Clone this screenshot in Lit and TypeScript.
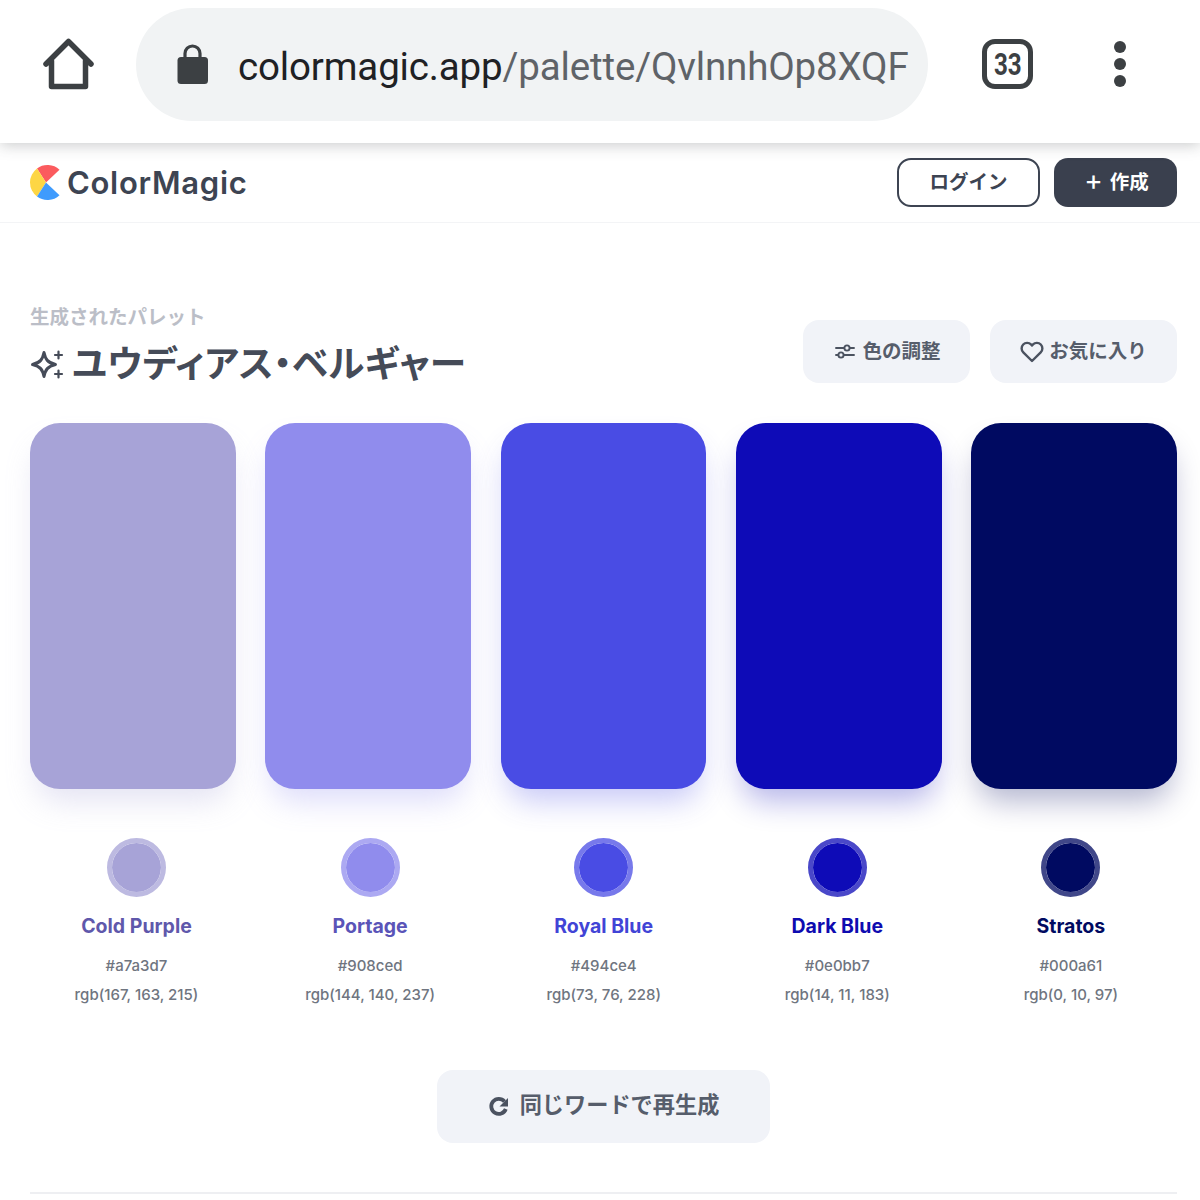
import { LitElement, html, css, svg } from 'lit';
import { customElement } from 'lit/decorators.js';

type Swatch = { name: string; hex: string; rgb: string; ink: string };

const SWATCHES: Swatch[] = [
  { name: 'Cold Purple', hex: '#a7a3d7', rgb: 'rgb(167, 163, 215)', ink: '#5f58ab' },
  { name: 'Portage', hex: '#908ced', rgb: 'rgb(144, 140, 237)', ink: '#5a54b8' },
  { name: 'Royal Blue', hex: '#494ce4', rgb: 'rgb(73, 76, 228)', ink: '#4144d6' },
  { name: 'Dark Blue', hex: '#0e0bb7', rgb: 'rgb(14, 11, 183)', ink: '#0e0bb0' },
  { name: 'Stratos', hex: '#000a61', rgb: 'rgb(0, 10, 97)', ink: '#000a61' },
];

const homeIcon = svg`<path d="M3 26 L25.5 3.5 L48 26 M8.5 23 V48.5 H42.5 V23" fill="none" stroke="#3c4043" stroke-width="5.5" stroke-linecap="round" stroke-linejoin="round"/>`;
const lockIcon = svg`<path d="M8 14 V9.5 a7.5 7.5 0 0 1 15 0 V14" fill="none" stroke="#3c4043" stroke-width="3.2"/><rect x="0.5" y="13" width="30.5" height="27" rx="3.5" fill="#3c4043"/>`;
const logoIcon = svg`
  <path d="M16 17.5 L29.5 4.8 A17.5 17.5 0 0 0 7 3.5 Z" fill="#fb5b5e"/>
  <path d="M16 17.5 L7 3.5 A17.5 17.5 0 0 0 7 31.5 Z" fill="#fdd645"/>
  <path d="M16 17.5 L7 31.5 A17.5 17.5 0 0 0 29.5 30.2 Z" fill="#3f9bfd"/>`;
const sparkleIcon = svg`
  <path d="M14 4.5 C15.5 11.5 17.500 14.500 25.500 16.500 C17.500 18.500 15.500 21.500 14 28.500 C12.500 21.500 10.500 18.500 2.500 16.500 C10.500 14.500 12.500 11.500 14 4.500 Z" fill="none" stroke="#454b58" stroke-width="3" stroke-linejoin="round"/>
  <path d="M28.500 3.500 V10.500 M25 7 H32 M28.500 22.500 V29.500 M25 26 H32" stroke="#454b58" stroke-width="2.200" stroke-linecap="round"/>`;
const slidersIcon = svg`
  <path d="M1 6 H9 M15 6 H19 M1 13 H3 M9 13 H19" stroke="#4b5260" stroke-width="1.900" stroke-linecap="round"/>
  <circle cx="12" cy="6" r="2.600" fill="none" stroke="#4b5260" stroke-width="1.900"/>
  <circle cx="6" cy="13" r="2.600" fill="none" stroke="#4b5260" stroke-width="1.900"/>`;
const heartIcon = svg`<path d="M12 21 L3.300 12.300 A5.500 5.500 0 0 1 11 4.400 L12 5.600 L13 4.400 A5.500 5.500 0 0 1 20.700 12.300 Z" fill="none" stroke="#4b5260" stroke-width="2.400" stroke-linejoin="round"/>`;
const refreshIcon = svg`
  <path d="M16.500 5.500 A7.500 7.500 0 1 0 17.800 13" fill="none" stroke="#4b5260" stroke-width="3.800"/>
  <path d="M20 2 V10.500 H11.500 Z" fill="#4b5260"/>`;

@customElement('app-root')
export class AppRoot extends LitElement {
  static styles = css`
    :host {
      display: block;
      width: 1200px;
      height: 1200px;
      overflow: hidden;
      background: #fff;
      font-family: Inter, 'Noto Sans CJK JP', sans-serif;
      color: #454b58;
    }
    .toolbar {
      position: relative;
      z-index: 1;
      height: 143px;
      box-sizing: border-box;
      display: flex;
      align-items: flex-start;
      background: #fff;
      box-shadow: 0 2px 14px rgba(60, 64, 67, 0.28);
    }
    .home {
      margin: 38px 0 0 43px;
      flex: none;
    }
    .url {
      margin: 8px 0 0 42px;
      width: 792px;
      height: 113px;
      box-sizing: border-box;
      padding-left: 41px;
      border-radius: 57px;
      background: #f1f3f4;
      display: flex;
      align-items: center;
      gap: 30px;
      flex: none;
      font-family: Roboto, sans-serif;
      font-size: 38.5px;
      color: #5f6368;
      letter-spacing: -0.15px;
    }
    .url svg {
      flex: none;
      margin-top: -1px;
    }
    .url span {
      padding-top: 4px;
    }
    .url b {
      font-weight: 400;
      color: #202124;
    }
    .tabs {
      margin: 39px 0 0 54px;
      width: 51px;
      height: 50px;
      box-sizing: border-box;
      border: 5px solid #3c4043;
      border-radius: 13px;
      flex: none;
      display: flex;
      align-items: center;
      justify-content: center;
      font-family: Roboto, sans-serif;
      font-weight: 700;
      font-size: 31px;
      color: #3c4043;
    }
    .tabs span {
      transform: scaleX(0.78);
    }
    .menu {
      margin: 41px 0 0 81px;
      display: flex;
      flex-direction: column;
      gap: 5px;
    }
    .menu i {
      width: 12px;
      height: 12px;
      border-radius: 50%;
      background: #3c4043;
    }
    .site-head {
      height: 80px;
      box-sizing: border-box;
      padding: 15px 23px 0 30px;
      display: flex;
      justify-content: space-between;
      align-items: flex-start;
      border-bottom: 1.5px solid #f3f4f6;
    }
    .brand {
      display: flex;
      align-items: center;
      gap: 7px;
      margin-top: 7px;
      font-family: Inter, sans-serif;
      font-weight: 600;
      font-size: 31px;
      line-height: 35px;
      letter-spacing: 0.7px;
      color: #3d4452;
    }
    .auth {
      display: flex;
      gap: 14px;
    }
    .btn {
      height: 49px;
      box-sizing: border-box;
      border-radius: 14px;
      display: flex;
      align-items: center;
      justify-content: center;
      font-size: 19.5px;
      font-weight: 700;
    }
    .btn span {
      padding-bottom: 4px;
    }
    .login {
      width: 143px;
      border: 2px solid #3d4452;
      background: #fff;
      color: #3d4452;
    }
    .create {
      width: 123px;
      background: #3a404e;
      color: #fff;
      gap: 7px;
      padding-left: 2px;
    }
    .create .plus {
      font-size: 28px;
      line-height: 30px;
      font-weight: 400;
      padding-bottom: 5px;
    }
    main {
      padding: 82px 23px 0 30px;
    }
    .head {
      display: flex;
      justify-content: space-between;
      align-items: flex-start;
    }
    .eyebrow {
      font-size: 19.5px;
      line-height: 24px;
      font-weight: 700;
      color: #bbbec7;
    }
    h1 {
      margin: 10px 0 0;
      display: flex;
      align-items: center;
      gap: 7px;
      font-size: 36.7px;
      line-height: 50px;
      font-weight: 700;
      color: #454b58;
      font-feature-settings: 'palt';
      letter-spacing: 0.2px;
    }
    .actions {
      display: flex;
      gap: 20px;
      margin-top: 15px;
    }
    .soft {
      height: 63px;
      box-sizing: border-box;
      border-radius: 16px;
      background: #f1f3f8;
      color: #565d6b;
      display: flex;
      align-items: center;
      justify-content: center;
      gap: 7px;
      font-size: 19.5px;
      font-weight: 700;
    }
    .soft span {
      padding-bottom: 4px;
    }
    .adjust {
      width: 167px;
      padding-left: 3px;
    }
    .fav {
      width: 187px;
      gap: 5px;
    }
    .swatches {
      margin-top: 34px;
      display: grid;
      grid-template-columns: repeat(5, 1fr);
      gap: 29.6px;
    }
    .swatch {
      height: 366px;
      border-radius: 30px;
      background: var(--c);
      box-shadow: 0 18px 30px -6px color-mix(in srgb, var(--c) 30%, transparent);
    }
    .details {
      margin: 49px -10.7px 0 -10.3px;
      display: grid;
      grid-template-columns: repeat(5, 1fr);
      text-align: center;
    }
    .dot {
      width: 59px;
      height: 59px;
      box-sizing: border-box;
      margin: 0 auto;
      border-radius: 50%;
      background: var(--c);
      background-clip: padding-box;
      border: 5px solid color-mix(in srgb, var(--c) 75%, #fff);
    }
    .name {
      margin-top: 16px;
      font-size: 19.5px;
      line-height: 26px;
      font-weight: 700;
      color: var(--ink);
    }
    .code {
      margin-top: 12px;
      font-size: 15px;
      line-height: 29px;
      font-weight: 500;
      color: #6f7580;
    }
    .regen {
      width: 333px;
      height: 73px;
      margin: 61px auto 0;
      border-radius: 16px;
      gap: 10px;
      font-size: 22.2px;
    }
    .regen span {
      padding-bottom: 8px;
    }
    .rule {
      margin-top: 49px;
      height: 2px;
      background: #eeeff2;
    }
  `;

  render() {
    return html`
      <div class="toolbar">
        <svg class="home" width="51" height="52" viewBox="0 0 51 52">${homeIcon}</svg>
        <div class="url">
          <svg width="31" height="41" viewBox="0 0 31 41">${lockIcon}</svg>
          <span><b>colormagic.app</b>/palette/QvlnnhOp8XQF</span>
        </div>
        <div class="tabs"><span>33</span></div>
        <div class="menu"><i></i><i></i><i></i></div>
      </div>

      <header class="site-head">
        <div class="brand">
          <svg width="30" height="35" viewBox="0 0 30 35">${logoIcon}</svg>
          <span>ColorMagic</span>
        </div>
        <div class="auth">
          <div class="btn login"><span>ログイン</span></div>
          <div class="btn create"><span class="plus">+</span><span>作成</span></div>
        </div>
      </header>

      <main>
        <div class="head">
          <div>
            <div class="eyebrow">生成されたパレット</div>
            <h1>
              <svg width="35" height="33" viewBox="0 0 35 33">${sparkleIcon}</svg>
              <span>ユウディアス・ベルギャー</span>
            </h1>
          </div>
          <div class="actions">
            <div class="soft adjust">
              <svg width="20" height="19" viewBox="0 0 20 19">${slidersIcon}</svg>
              <span>色の調整</span>
            </div>
            <div class="soft fav">
              <svg width="24" height="24" viewBox="0 0 24 24">${heartIcon}</svg>
              <span>お気に入り</span>
            </div>
          </div>
        </div>

        <div class="swatches">
          ${SWATCHES.map((s) => html`<div class="swatch" style="--c:${s.hex}"></div>`)}
        </div>

        <div class="details">
          ${SWATCHES.map(
            (s) => html`
              <div style="--c:${s.hex};--ink:${s.ink}">
                <div class="dot"></div>
                <div class="name">${s.name}</div>
                <div class="code">${s.hex}<br />${s.rgb}</div>
              </div>
            `
          )}
        </div>

        <div class="soft regen">
          <svg width="22" height="22" viewBox="0 0 22 22">${refreshIcon}</svg>
          <span>同じワードで再生成</span>
        </div>
        <div class="rule"></div>
      </main>
    `;
  }
}
